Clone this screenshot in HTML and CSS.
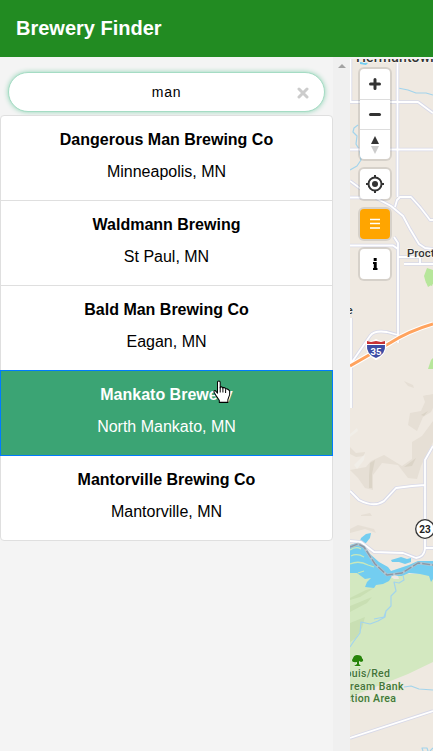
FILE: index.html
```html
<!DOCTYPE html>
<html lang="en">
<head>
<meta charset="utf-8">
<title>Brewery Finder</title>
<link rel="stylesheet" href="styles.css">
</head>
<body>
<header class="header"><h1>Brewery Finder</h1></header>
<main class="layout">
  <section class="sidebar">
    <div class="search">
      <input class="search-input" type="text" value="man" aria-label="Search">
      <svg class="clear" viewBox="0 0 12 12"><path d="M2 2L10 10M10 2L2 10"/></svg>
    </div>
    <ul class="results">
      <li class="item"><strong>Dangerous Man Brewing Co</strong><span>Minneapolis, MN</span></li>
      <li class="item"><strong>Waldmann Brewing</strong><span>St Paul, MN</span></li>
      <li class="item"><strong>Bald Man Brewing Co</strong><span>Eagan, MN</span></li>
      <li class="item active"><strong>Mankato Brewery</strong><span>North Mankato, MN</span>
        <svg class="cursor" viewBox="0 0 20 23" preserveAspectRatio="none"><path d="M5 2.2Q5 1 6.5 1T8 2.2V7.5Q8 6.4 9.5 6.6T11 8Q11 7 12.5 7.3T14 8.8Q14.2 8.2 15.5 8.5T18.5 10.5V14L16.5 19V21.5H7V19.5L3 14.5L1 11.5Q1 10 2.5 10.2L5 12.5Z"/><path d="M8 7V12M11 8V12M14 9V12.5"/></svg>
      </li>
      <li class="item"><strong>Mantorville Brewing Co</strong><span>Mantorville, MN</span></li>
    </ul>
  </section>
  <div class="scroll"><svg viewBox="0 0 8 4"><path d="M0 4L4 0L8 4Z"/></svg></div>
  <section class="map">
    <svg class="map-canvas" viewBox="350 59 83 692">
      <path class="land" d="M350 59H433V751H350Z"/>
      <g class="hill">
        <path d="M433 394L423 396L425 402L421 411L410 413L408 425L417 431L423 417L431 412L433 408Z"/>
        <path d="M433 421L422 436L412 442V459L402 466L384 455L371 461L366 467L350 470L358 478L365 488L373 490V475L382 463L398 465L408 478L417 479L421 466L433 442Z"/>
        <path d="M350 447L356 453L365 452L364 456L356 457L350 454Z"/>
        <path d="M404 381L413 385L414 388L408 386ZM423 396L428 395L433 400ZM350 529L358 525L374 529L376 533L365 529L350 533ZM361 515L370 513L372 516H361Z"/>
      </g>
      <path class="hill-dark" d="M370 463L375 460L372 474V488H369V476ZM404 467L416 458L412 466ZM421 415L428 411L424 416Z"/>
      <path class="hill-light" d="M350 434L357 428L358 431L350 437ZM354 465L365 454L364 460L357 469Z"/>
      <path class="park" d="M350 567L390 577L408 574L433 574V662L408 674L378 686L350 697Z"/>
      <path class="park-dark" d="M350 598L366 590L374 588L360 597L350 600ZM350 606L372 597L367 603L350 612ZM350 623L365 617L362 628L356 638L350 642Z"/>
      <path class="leaf" d="M425 280H433V284L428 287ZM427 268L433 270V283L432 286L426 283L424 276ZM431 360L433 358V369H428Z"/>
      <g class="water">
        <path d="M360 541L361 538L366 534L371 533L370 538L366 543H362Z"/>
        <path d="M350 545L359 542L364 545L370 554L379 562L388 567L391 571L400 568L409 565L418 561H433V579L431 582L429 576L420 574L409 573L402 576L392 576L389 581L383 584L376 585L374 588L365 587L367 582L371 578L365 579L357 573L350 573Z"/>
        <path d="M391 560L401 557L407 559L411 558V562L405 564L399 562H392Z"/>
        <path d="M360 62L368 63L366 65L360 64Z"/>
      </g>
      <path class="sand" d="M391 577L394 575L398 576L399 579L394 579Z"/>
      <path class="reed" d="M350 550Q356 546 361 549M351 556Q357 553 364 557M350 564Q359 560 368 565L374 567M358 573L364 571"/>
      <g class="stream">
        <path d="M398 88L408 90L416 93L426 93L433 95M358 125L354 128L353 132L357 136L356 144L360 151L361 160L357 166L350 170"/>
        <path d="M403 575L404 580L399 583L394 582L396 591L391 596L391 606L386 611L384 617L374 619M386 611L385 617L378 621L370 624L361 622L360 633L354 641L350 647"/>
        <path d="M404 687L411 686L419 689L433 690M423 751L422 748L427 748L428 751M430 751L433 748"/>
      </g>
      <path class="roads" d="M350.500 59V102M350 102H418L433 113M397.500 59V197M350 149.500H433M350 197.500H370M350 181L361 189M376 198L391 206L403 216L410 229L419 244L425 248L433 249M395 207L397 200L400 197H411L420 207L427 216L430 220H433M350 245.500H393L398 249M394 237L398 243V343M398 257H420V264M404 264H433M351 318V408M352 362L370 336Q374 330 387 332L398 335M350 491L359 500Q374 508 384 501L396 488L412 486L425 485M433 446L425 460V549Q424 557 416 558L403 553L374 552L361 542L350 541M425 548H433M350 738L433 711"/>
      <path class="roads-top" d="M350.500 59V102M350 102H418L433 113M397.500 59V197M350 149.500H433M350 197.500H370M350 181L361 189M376 198L391 206L403 216L410 229L419 244L425 248L433 249M395 207L397 200L400 197H411L420 207L427 216L430 220H433M350 245.500H393L398 249M394 237L398 243V343M398 257H420V264M404 264H433M351 318V408M352 362L370 336Q374 330 387 332L398 335M350 491L359 500Q374 508 384 501L396 488L412 486L425 485M433 446L425 460V549Q424 557 416 558L403 553L374 552L361 542L350 541M425 548H433M350 738L433 711"/>
      <path class="rail" d="M350 547L358 544L364 547L375 564L387 575L402 573L418 563L433 565"/>
      <path class="rail-top" d="M350 547L358 544L364 547L375 564L387 575L402 573L418 563L433 565"/>
      <path class="highway-edge" d="M350 366L390 343Q409 331 433 324"/>
      <path class="highway" d="M350 366L390 343Q409 331 433 324"/>
      <path class="shield-edge" d="M367 342Q371 343 376 340Q381 343 385 342Q387 353 376 359Q365 353 367 342Z"/>
      <path class="shield-blue" d="M367 345H385Q386 354 376 358Q366 354 367 345Z"/>
      <path class="shield-red" d="M367 341L371 342L376 341L381 342L385 341V344H367Z"/>
      <text class="label shield-text" x="376" y="354.500">35</text>
      <circle class="route" cx="425" cy="529" r="9.300"/>
      <text class="label route-text" x="425" y="533">23</text>
      <text class="label town large" x="356" y="62" textLength="82">Hermantown</text>
      <text class="label town" x="407" y="257" textLength="38">Proctor</text>
      <text class="label town" x="346.500" y="314">e</text>
      <g class="label area">
        <text x="345.500" y="677" textLength="44.500">ouis/Red</text>
        <text x="346" y="689.500" textLength="57.500">tream Bank</text>
        <text x="345" y="702" textLength="51">ction Area</text>
      </g>
      <path class="tree" d="M353 658Q354 655 357 655Q362 655 362 658Q365 661 361 662L359 661V664L361 666H354L357 664V662Q352 663 352 660Z"/>
    </svg>
    <div class="controls">
      <div class="group">
        <button aria-label="Zoom in"><svg class="line" viewBox="0 0 30 30"><path d="M10.500 15H19.500M15 10.500V19.500"/></svg></button>
        <button aria-label="Zoom out"><svg class="line" viewBox="0 0 30 30"><path d="M10.500 14.500H19.500"/></svg></button>
        <button aria-label="Reset north"><svg viewBox="0 0 30 30"><path class="north" d="M11 14L15 6L19 14Z"/><path class="south" d="M11 16L15 24L19 16Z"/></svg></button>
      </div>
      <div class="group">
        <button aria-label="Locate"><svg class="locate" viewBox="0 0 30 30"><circle cx="15" cy="15" r="6.500"/><circle class="dot" cx="15" cy="15" r="3"/><path d="M15 6V9M15 21V24M6 15H9M21 15H24"/></svg></button>
      </div>
      <div class="group menu">
        <button aria-label="List"><svg viewBox="0 0 30 30"><path d="M10 10.500H20M10 14.500H20M10 19H20"/></svg></button>
      </div>
      <div class="group">
        <button aria-label="Information"><svg viewBox="0 0 30 30"><path d="M13.700 9H16.700V12H13.700ZM13 13H16.700V19H17.500V21H13V19H13.800V15H13Z"/></svg></button>
      </div>
    </div>
  </section>
</main>
</body>
</html>
```
FILE: styles.css
```css
* { box-sizing: border-box; }
body { margin: 0; height: 751px; overflow: hidden; background: #f4f4f4; color: #000; font: 16px/24px "Liberation Sans", Arial, sans-serif; }
.header { height: 57px; display: flex; align-items: center; padding: 0 16px; background: #228b22; color: #fff; }
.header h1 { margin: 0; font-size: 20px; line-height: 28px; position: relative; top: -1px; }
.layout { display: flex; height: 694px; }
.sidebar { width: 333px; padding-top: 15px; }
.search { position: relative; height: 40px; margin: 0 8px 3px; }
.search-input { display: block; width: 317px; height: 40px; padding: 0 32px; border: 1px solid #a5dcc4; border-radius: 20px; outline: 0; background: #fff; box-shadow: 0 0 5px #8fd4b5; text-align: center; font: 14px "Liberation Sans", Arial, sans-serif; letter-spacing: .8px; }
.clear { position: absolute; top: 15px; right: 16px; width: 12px; height: 12px; fill: none; stroke: #ccc; stroke-width: 3; stroke-linecap: round; }
.results { margin: 0; padding: 0; list-style: none; }
.item { position: relative; display: flex; flex-direction: column; gap: 8px; height: 86px; padding: 12px 19px; border: 1px solid #dfdfdf; background: #fff; text-align: center; }
.item + .item { margin-top: -1px; }
.item:first-child { border-radius: 4px 4px 0 0; }
.item:last-child { border-radius: 0 0 4px 4px; }
.item.active { z-index: 1; border-color: #007bff; background: #3ba474; color: #fff; }
.cursor { position: absolute; left: 212px; top: 9px; width: 18px; height: 24px; fill: #fff; stroke: #000; stroke-width: 1.1; stroke-linejoin: round; }
.scroll { width: 17px; padding: 7px 0 0 5px; background: #f0f0f0; }
.scroll svg { display: block; width: 8px; height: 4px; fill: #a3a3a3; }
.map { position: relative; width: 83px; padding-top: 2px; }
.map-canvas { display: block; width: 83px; height: 692px; }
.map-canvas path { stroke-linejoin: round; }
.land { fill: #efe9e1; }
.hill { fill: #e6dfd5; }
.hill-dark { fill: #dbd4c7; }
.hill-light { fill: #f1eee8; }
.park { fill: #d3e8c0; }
.park-dark { fill: #c9dfb3; }
.leaf { fill: #b7e69b; }
.water { fill: #73cdf0; }
.sand { fill: #efe8e3; }
.reed { fill: none; stroke: #c9e8ba; stroke-width: 1.3; }
.stream { fill: none; stroke: #a3d4ec; stroke-width: 1.2; }
.roads { fill: none; stroke: #d8d9e8; stroke-width: 3.5; }
.roads-top { fill: none; stroke: #fff; stroke-width: 1.8; }
.rail { fill: none; stroke: #b4c4cf; stroke-width: 2.6; }
.rail-top { fill: none; stroke: #8b98a5; stroke-width: 1.4; stroke-dasharray: 8 2; }
.highway-edge { fill: none; stroke: #fff; stroke-width: 5; }
.highway { fill: none; stroke: #ffa35e; stroke-width: 3; }
.shield-edge { fill: #fff; stroke: #fff; stroke-width: 2; }
.shield-blue { fill: #3e4da5; }
.shield-red { fill: #c93235; }
.label { font-family: Roboto, sans-serif; paint-order: stroke; stroke-linejoin: round; }
.shield-text { fill: #fff; font-size: 9.5px; font-weight: 700; text-anchor: middle; }
.route { fill: #fff; stroke: #333; stroke-width: 1.3; }
.route-text { fill: #222; font-size: 10px; font-weight: 700; text-anchor: middle; }
.town { fill: #333; stroke: #f7f4f0; stroke-width: 1.5px; font-size: 11.5px; font-weight: 500; }
.town.large { font-size: 14px; }
.area { fill: #447638; stroke: #dfecd3; stroke-width: 1px; font-size: 10.5px; font-weight: 500; }
.tree { fill: #278509; stroke: #eaf4df; stroke-width: 1; paint-order: stroke; }
.controls { position: absolute; top: 12px; left: 10px; display: flex; flex-direction: column; gap: 10px; }
.group { width: 30px; border-radius: 4px; background: #fff; box-shadow: 0 0 0 2px rgba(0, 0, 0, .1); overflow: hidden; }
.group button { display: block; width: 30px; height: 30px; padding: 0; border: 0; background: transparent; }
.group button + button { border-top: 1px solid #ddd; }
.group svg { display: block; width: 30px; height: 30px; }
.line { fill: none; stroke: #333; stroke-width: 3; stroke-linecap: round; }
.north { fill: #333; }
.south { fill: #ccc; }
.locate { fill: none; stroke: #333; stroke-width: 2; }
.locate .dot { fill: #333; stroke: none; }
.menu { background: orange; }
.menu svg { stroke: #fff; stroke-width: 1.5; }
```
